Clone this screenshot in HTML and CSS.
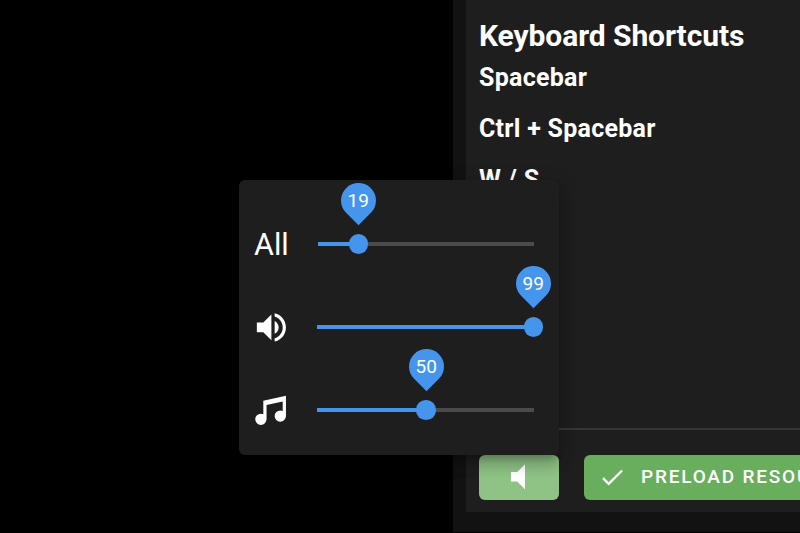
FILE: index.html
```
<!DOCTYPE html>
<html lang="en">
<head>
<meta charset="utf-8">
<title>Keyboard Shortcuts</title>
<link rel="stylesheet" href="styles.css">
</head>
<body>
<div class="app">
  <div class="stage"></div>
  <main class="side">
    <section class="card">
      <div class="content">
        <h1 class="title">Keyboard Shortcuts</h1>
        <h2 class="key">Spacebar</h2>
        <h2 class="key">Ctrl + Spacebar</h2>
        <h2 class="key">W / S</h2>
      </div>
      <footer class="actions">
        <button class="btn btn-volume" aria-label="Volume">
          <svg class="icon-low" viewBox="0 0 24 24"><path d="M7,9V15H11L16,20V4L11,9H7Z"/></svg>
        </button>
        <button class="btn btn-preload">
          <svg class="icon-check" viewBox="0 0 24 24"><path d="M21,7L9,19L3.5,13.5L4.91,12.09L9,16.17L19.59,5.59L21,7Z"/></svg>
          <span>PRELOAD RESOU</span>
        </button>
      </footer>
    </section>
  </main>
</div>
<div class="menu">
  <div class="row">
    <span class="all">All</span>
    <div class="slider"><div class="fill" style="width:19%"><div class="thumb"><div class="pin"><span>19</span></div></div></div></div>
  </div>
  <div class="row">
    <svg class="icon" viewBox="0 0 24 24"><path d="M14,3.23V5.29C16.89,6.15 19,8.83 19,12C19,15.17 16.89,17.84 14,18.7V20.77C18,19.86 21,16.28 21,12C21,7.72 18,4.14 14,3.23M16.5,12C16.5,10.23 15.5,8.71 14,7.97V16C15.5,15.29 16.5,13.76 16.5,12M3,9V15H7L12,20V4L7,9H3Z"/></svg>
    <div class="slider"><div class="fill" style="width:100%"><div class="thumb"><div class="pin"><span>99</span></div></div></div></div>
  </div>
  <div class="row">
    <svg class="icon" viewBox="0 0 24 24"><path d="M21,3V15.5A3.5,3.5 0 0,1 17.5,19A3.5,3.5 0 0,1 14,15.5A3.5,3.5 0 0,1 17.5,12C18.04,12 18.55,12.12 19,12.34V6.47L9,8.6V17.5A3.5,3.5 0 0,1 5.5,21A3.5,3.5 0 0,1 2,17.5A3.5,3.5 0 0,1 5.5,14C6.04,14 6.55,14.12 7,14.34V6L21,3Z"/></svg>
    <div class="slider"><div class="fill" style="width:50.3%"><div class="thumb"><div class="pin"><span>50</span></div></div></div></div>
  </div>
</div>
</body>
</html>
```

FILE: styles.css
```
* { box-sizing: border-box; }
body {
  margin: 0;
  background: #000;
  color: #fff;
  font-family: Roboto, sans-serif;
  overflow: hidden;
}
svg { fill: currentColor; flex: none; display: block; }
.app { display: flex; height: 532px; overflow: hidden; }
.stage { flex: 0 0 453.4px; background: #000; }
.side {
  flex: 1;
  min-width: 0;
  display: flex;
  background: #121212;
  padding: 0 0 20px 12.6px;
}
.card {
  flex: 1;
  min-width: 0;
  display: flex;
  flex-direction: column;
  background: #1e1e1e;
  overflow: hidden;
}
.content {
  height: 430px;
  padding: 16px 13px 0;
  border-bottom: 2px solid #363636;
}
.title { margin: 0; font-size: 30px; line-height: 40px; font-weight: 700; letter-spacing: -0.08px; }
.key { margin: 0 0 19px; font-size: 25px; line-height: 32px; font-weight: 700; letter-spacing: 0.27px; }
.title + .key { margin-top: 6px; }
.actions { display: flex; gap: 25px; padding: 25px 13px 0; }
.btn {
  display: flex;
  align-items: center;
  flex: none;
  height: 45px;
  border: 0;
  border-radius: 6px;
  padding: 0 0 1px;
  color: #fff;
  font: 500 19px/44px Roboto, sans-serif;
  letter-spacing: 1.8px;
  white-space: nowrap;
}
.btn-volume { width: 80px; justify-content: center; background: #8ec385; }
.btn-preload { width: 290px; padding-left: 14px; background: #69ae5d; }
.icon-low { width: 37.5px; height: 37.5px; }
.icon-check { width: 28.5px; height: 28.5px; margin-right: 14.5px; }

.menu {
  position: absolute;
  left: 239px;
  top: 180px;
  width: 320px;
  height: 275px;
  padding: 22.5px 25.5px 0 13px;
  border-radius: 6px;
  background: #1e1e1e;
  box-shadow: 0 6px 6px -3px rgba(0,0,0,.2), 0 10px 13px 1px rgba(0,0,0,.14), 0 4px 18px 3px rgba(0,0,0,.12);
}
.row { display: flex; align-items: center; height: 83px; }
.icon { width: 38.8px; height: 38.8px; margin-right: 26.7px; }
.all { width: 63.5px; margin-left: 2px; padding-top: 1px; font-size: 30.5px; line-height: 40px; }
.slider { flex: 1; height: 4px; background: #4b4b4b; }
.fill { position: relative; height: 4px; background: #4595ec; }
.thumb {
  position: absolute;
  right: -9.75px;
  top: -7.75px;
  width: 19.5px;
  height: 19.5px;
  border-radius: 50%;
  background: #4595ec;
}
.pin {
  position: absolute;
  left: -7.75px;
  top: -51.5px;
  width: 35px;
  height: 35px;
  display: flex;
  align-items: center;
  justify-content: center;
  border-radius: 50% 50% 0 50%;
  background: #4595ec;
  transform: rotate(45deg);
}
.pin span { transform: rotate(-45deg); font-size: 19px; line-height: 24px; }
```
